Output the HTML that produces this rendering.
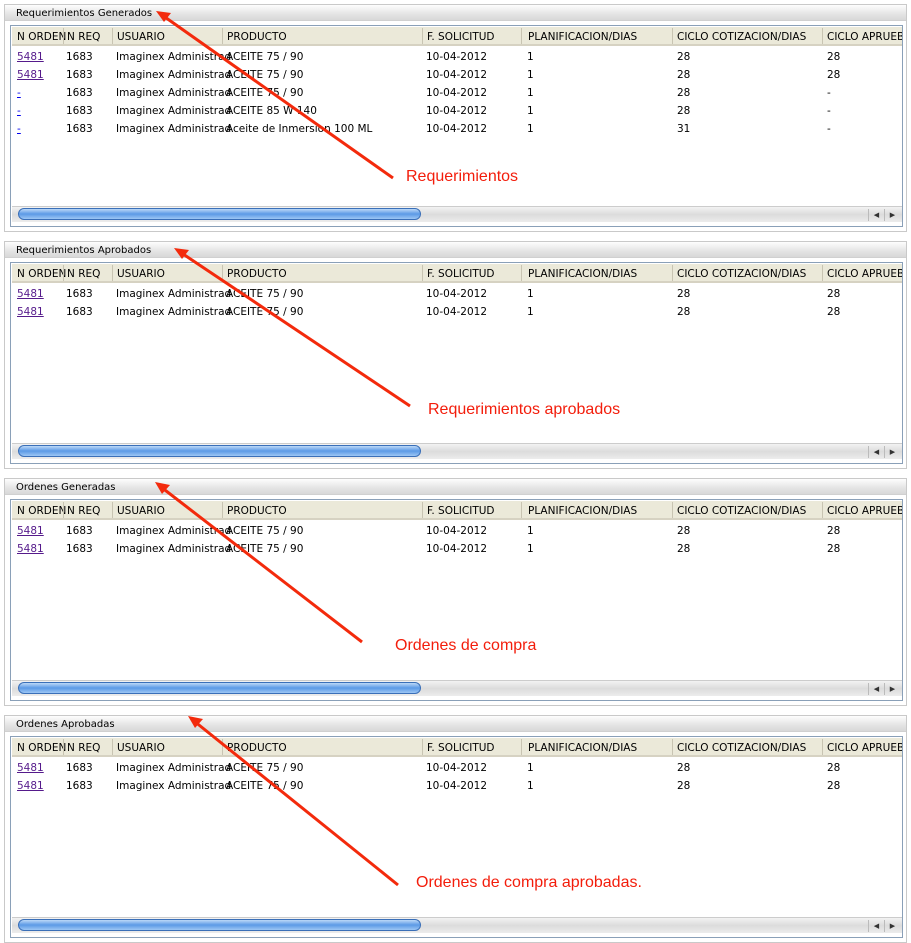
<!DOCTYPE html>
<html><head><meta charset="utf-8"><style>
*{margin:0;padding:0;box-sizing:border-box}
body{width:911px;height:923px;background:#fff;position:relative;overflow:hidden;font-family:"DejaVu Sans","Liberation Sans",sans-serif;font-size:10.5px;color:#000}
.p{position:absolute;left:4px;width:903px;height:228px;border:1px solid #c9c9c9;background:#fff}
.tb{position:absolute;left:0;top:0;width:901px;height:16px;background:linear-gradient(#fdfdfd,#e4e4e4 60%,#d8d8d8);border-bottom:1px solid #d0d0d0}
.tb span{position:absolute;left:11px;top:3px;font-size:10px}
.ib{position:absolute;left:5px;top:20px;width:893px;height:202px;border:1px solid #8aa0b8;background:#fff;overflow:hidden}
.hd{position:absolute;left:1px;top:1px;width:890px;height:19px;background:#ebe9d9;border-bottom:2px solid #d6d2c2}
.c{position:absolute;white-space:nowrap}
.hd .c{top:4px}
.sep{position:absolute;top:1px;width:1px;height:16px;background:#c8c4b2}
a{color:#551a8b;text-decoration:underline}
a.b{color:#0000ee}
.sb{position:absolute;left:1px;top:180px;width:890px;height:16px;background:linear-gradient(#f2f2f2,#dcdcdc 50%,#ececec);border-top:1px solid #ccc}
.th{position:absolute;left:6px;top:1px;width:403px;height:12px;border-radius:6px;border:1px solid #3a6fb8;background:linear-gradient(#bcd8f7,#5b9ae6 50%,#9cc6f5)}
.ar{position:absolute;top:2px;width:16px;height:12px;font-size:7px;color:#333;text-align:center;line-height:12px;border-left:1px solid #bbb}
.lab{position:absolute;color:#f31d0b;font-family:"Liberation Sans",sans-serif;font-size:16px}
.rows{position:absolute;left:0;top:25px}
.rows div{position:relative;height:18px}
</style></head><body>

<div class="p" style="top:4px"><div class="tb"><span>Requerimientos Generados</span></div>
<div class="ib"><div class="hd">
<span class="c" style="left:5px">N ORDEN</span><i class="sep" style="left:51px"></i>
<span class="c" style="left:55px">N REQ</span><i class="sep" style="left:100px"></i>
<span class="c" style="left:105px">USUARIO</span><i class="sep" style="left:210px"></i>
<span class="c" style="left:215px">PRODUCTO</span><i class="sep" style="left:410px"></i>
<span class="c" style="left:415px">F. SOLICITUD</span><i class="sep" style="left:509px"></i>
<span class="c" style="left:516px">PLANIFICACION/DIAS</span><i class="sep" style="left:660px"></i>
<span class="c" style="left:665px">CICLO COTIZACION/DIAS</span><i class="sep" style="left:810px"></i>
<span class="c" style="left:815px">CICLO APRUEB</span></div>
<div class="rows">
<div><a class="c" style="left:6px">5481</a><span class="c" style="left:55px">1683</span><span class="c" style="left:105px">Imaginex Administrad</span><span class="c" style="left:215px">ACEITE 75 / 90</span><span class="c" style="left:415px">10-04-2012</span><span class="c" style="left:516px">1</span><span class="c" style="left:666px">28</span><span class="c" style="left:816px">28</span></div>
<div><a class="c" style="left:6px">5481</a><span class="c" style="left:55px">1683</span><span class="c" style="left:105px">Imaginex Administrad</span><span class="c" style="left:215px">ACEITE 75 / 90</span><span class="c" style="left:415px">10-04-2012</span><span class="c" style="left:516px">1</span><span class="c" style="left:666px">28</span><span class="c" style="left:816px">28</span></div>
<div><a class="c b" style="left:6px">-</a><span class="c" style="left:55px">1683</span><span class="c" style="left:105px">Imaginex Administrad</span><span class="c" style="left:215px">ACEITE 75 / 90</span><span class="c" style="left:415px">10-04-2012</span><span class="c" style="left:516px">1</span><span class="c" style="left:666px">28</span><span class="c" style="left:816px">-</span></div>
<div><a class="c b" style="left:6px">-</a><span class="c" style="left:55px">1683</span><span class="c" style="left:105px">Imaginex Administrad</span><span class="c" style="left:215px">ACEITE 85 W 140</span><span class="c" style="left:415px">10-04-2012</span><span class="c" style="left:516px">1</span><span class="c" style="left:666px">28</span><span class="c" style="left:816px">-</span></div>
<div><a class="c b" style="left:6px">-</a><span class="c" style="left:55px">1683</span><span class="c" style="left:105px">Imaginex Administrad</span><span class="c" style="left:215px">Aceite de Inmersion 100 ML</span><span class="c" style="left:415px">10-04-2012</span><span class="c" style="left:516px">1</span><span class="c" style="left:666px">31</span><span class="c" style="left:816px">-</span></div>
</div>
<div class="sb"><div class="th"></div><div class="ar" style="left:856px">◀</div><div class="ar" style="left:872px">▶</div></div>
</div></div>

<div class="p" style="top:241px"><div class="tb"><span>Requerimientos Aprobados</span></div>
<div class="ib"><div class="hd">
<span class="c" style="left:5px">N ORDEN</span><i class="sep" style="left:51px"></i>
<span class="c" style="left:55px">N REQ</span><i class="sep" style="left:100px"></i>
<span class="c" style="left:105px">USUARIO</span><i class="sep" style="left:210px"></i>
<span class="c" style="left:215px">PRODUCTO</span><i class="sep" style="left:410px"></i>
<span class="c" style="left:415px">F. SOLICITUD</span><i class="sep" style="left:509px"></i>
<span class="c" style="left:516px">PLANIFICACION/DIAS</span><i class="sep" style="left:660px"></i>
<span class="c" style="left:665px">CICLO COTIZACION/DIAS</span><i class="sep" style="left:810px"></i>
<span class="c" style="left:815px">CICLO APRUEB</span></div>
<div class="rows">
<div><a class="c" style="left:6px">5481</a><span class="c" style="left:55px">1683</span><span class="c" style="left:105px">Imaginex Administrad</span><span class="c" style="left:215px">ACEITE 75 / 90</span><span class="c" style="left:415px">10-04-2012</span><span class="c" style="left:516px">1</span><span class="c" style="left:666px">28</span><span class="c" style="left:816px">28</span></div>
<div><a class="c" style="left:6px">5481</a><span class="c" style="left:55px">1683</span><span class="c" style="left:105px">Imaginex Administrad</span><span class="c" style="left:215px">ACEITE 75 / 90</span><span class="c" style="left:415px">10-04-2012</span><span class="c" style="left:516px">1</span><span class="c" style="left:666px">28</span><span class="c" style="left:816px">28</span></div>
</div>
<div class="sb"><div class="th"></div><div class="ar" style="left:856px">◀</div><div class="ar" style="left:872px">▶</div></div>
</div></div>

<div class="p" style="top:478px"><div class="tb"><span>Ordenes Generadas</span></div>
<div class="ib"><div class="hd">
<span class="c" style="left:5px">N ORDEN</span><i class="sep" style="left:51px"></i>
<span class="c" style="left:55px">N REQ</span><i class="sep" style="left:100px"></i>
<span class="c" style="left:105px">USUARIO</span><i class="sep" style="left:210px"></i>
<span class="c" style="left:215px">PRODUCTO</span><i class="sep" style="left:410px"></i>
<span class="c" style="left:415px">F. SOLICITUD</span><i class="sep" style="left:509px"></i>
<span class="c" style="left:516px">PLANIFICACION/DIAS</span><i class="sep" style="left:660px"></i>
<span class="c" style="left:665px">CICLO COTIZACION/DIAS</span><i class="sep" style="left:810px"></i>
<span class="c" style="left:815px">CICLO APRUEB</span></div>
<div class="rows">
<div><a class="c" style="left:6px">5481</a><span class="c" style="left:55px">1683</span><span class="c" style="left:105px">Imaginex Administrad</span><span class="c" style="left:215px">ACEITE 75 / 90</span><span class="c" style="left:415px">10-04-2012</span><span class="c" style="left:516px">1</span><span class="c" style="left:666px">28</span><span class="c" style="left:816px">28</span></div>
<div><a class="c" style="left:6px">5481</a><span class="c" style="left:55px">1683</span><span class="c" style="left:105px">Imaginex Administrad</span><span class="c" style="left:215px">ACEITE 75 / 90</span><span class="c" style="left:415px">10-04-2012</span><span class="c" style="left:516px">1</span><span class="c" style="left:666px">28</span><span class="c" style="left:816px">28</span></div>
</div>
<div class="sb"><div class="th"></div><div class="ar" style="left:856px">◀</div><div class="ar" style="left:872px">▶</div></div>
</div></div>

<div class="p" style="top:715px"><div class="tb"><span>Ordenes Aprobadas</span></div>
<div class="ib"><div class="hd">
<span class="c" style="left:5px">N ORDEN</span><i class="sep" style="left:51px"></i>
<span class="c" style="left:55px">N REQ</span><i class="sep" style="left:100px"></i>
<span class="c" style="left:105px">USUARIO</span><i class="sep" style="left:210px"></i>
<span class="c" style="left:215px">PRODUCTO</span><i class="sep" style="left:410px"></i>
<span class="c" style="left:415px">F. SOLICITUD</span><i class="sep" style="left:509px"></i>
<span class="c" style="left:516px">PLANIFICACION/DIAS</span><i class="sep" style="left:660px"></i>
<span class="c" style="left:665px">CICLO COTIZACION/DIAS</span><i class="sep" style="left:810px"></i>
<span class="c" style="left:815px">CICLO APRUEB</span></div>
<div class="rows">
<div><a class="c" style="left:6px">5481</a><span class="c" style="left:55px">1683</span><span class="c" style="left:105px">Imaginex Administrad</span><span class="c" style="left:215px">ACEITE 75 / 90</span><span class="c" style="left:415px">10-04-2012</span><span class="c" style="left:516px">1</span><span class="c" style="left:666px">28</span><span class="c" style="left:816px">28</span></div>
<div><a class="c" style="left:6px">5481</a><span class="c" style="left:55px">1683</span><span class="c" style="left:105px">Imaginex Administrad</span><span class="c" style="left:215px">ACEITE 75 / 90</span><span class="c" style="left:415px">10-04-2012</span><span class="c" style="left:516px">1</span><span class="c" style="left:666px">28</span><span class="c" style="left:816px">28</span></div>
</div>
<div class="sb"><div class="th"></div><div class="ar" style="left:856px">◀</div><div class="ar" style="left:872px">▶</div></div>
</div></div>

<svg width="911" height="923" style="position:absolute;left:0;top:0" stroke="#f32a0c" stroke-width="3" fill="#f32a0c">
<line x1="393" y1="178" x2="162" y2="15"/><polygon stroke="none" points="156,11 171,13 164,22"/>
<line x1="410" y1="406" x2="180" y2="252"/><polygon stroke="none" points="174,248 189,250 182,259"/>
<line x1="362" y1="642" x2="161" y2="487"/><polygon stroke="none" points="155,482 170,485 162,494"/>
<line x1="398" y1="885" x2="194" y2="721"/><polygon stroke="none" points="188,716 203,719 195,728"/>
</svg>
<div class="lab" style="left:406px;top:168px">Requerimientos</div>
<div class="lab" style="left:428px;top:401px">Requerimientos aprobados</div>
<div class="lab" style="left:395px;top:637px">Ordenes de compra</div>
<div class="lab" style="left:416px;top:874px">Ordenes de compra aprobadas.</div>
</body></html>
